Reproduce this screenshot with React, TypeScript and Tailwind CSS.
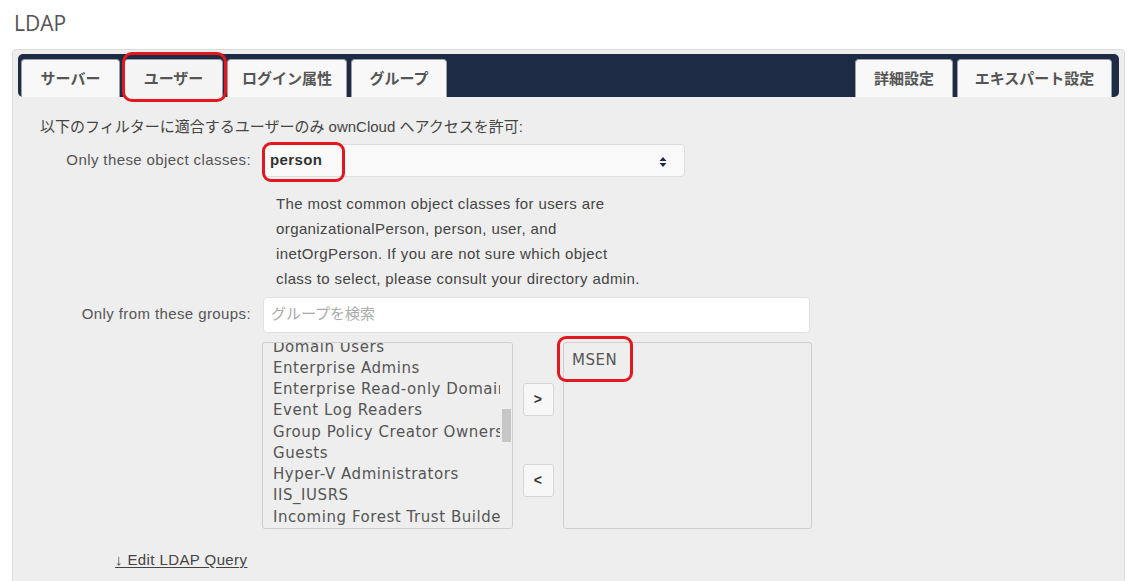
import React from "react";

const JP = "'Liberation Sans', 'Noto Sans CJK JP', sans-serif";

function Tab({ label, w, active }: { label: string; w: string; active?: boolean }) {
  return (
    <div
      className={`${w} h-[38px] flex items-center justify-center rounded-t-[4px] border border-b-0 border-[#9aa0a8] ${
        active ? "bg-[#f4f4f4]" : "bg-[#f8f8f8]"
      } text-[15px] font-bold text-[#555]`}
      style={{ fontFamily: "'Noto Sans CJK JP', sans-serif" }}
    >
      {label}
    </div>
  );
}

const leftItems = [
  "Domain Users",
  "Enterprise Admins",
  "Enterprise Read-only Domain Controllers",
  "Event Log Readers",
  "Group Policy Creator Owners",
  "Guests",
  "Hyper-V Administrators",
  "IIS_IUSRS",
  "Incoming Forest Trust Builders",
];

export default function App() {
  return (
    <div
      className="relative w-[1130px] h-[581px] overflow-hidden bg-white text-[15px] tracking-[0.4px] text-[#444]"
      style={{ fontFamily: JP }}
    >
      <div
        className="pl-[14px] pt-[8px] h-[49px] text-[21px] tracking-normal text-[#555]"
        style={{ fontFamily: "'Open Sans', sans-serif" }}
      >
        LDAP
      </div>

      <div className="ml-[12px] mr-[5px] h-[540px] border border-[#dcdcdc] rounded-t-[4px] bg-[#eeeeee] pt-[4px] px-[5px]">
        {/* tab bar */}
        <div className="h-[43px] bg-[#1d2c44] rounded-[5px] flex items-end pl-[3px] pr-[7px] gap-[4px] tracking-normal">
          <Tab label="サーバー" w="w-[99px]" />
          <Tab label="ユーザー" w="w-[99px]" active />
          <Tab label="ログイン属性" w="w-[120px]" />
          <Tab label="グループ" w="w-[96px]" />
          <div className="flex-1" />
          <Tab label="詳細設定" w="w-[98px]" />
          <Tab label="エキスパート設定" w="w-[155px]" />
        </div>

        {/* content */}
        <div className="pt-[19px] pl-[22px] tracking-normal text-[#444]" style={{ fontFamily: JP }}>
          以下のフィルターに適合するユーザーのみ ownCloud ヘアクセスを許可:
        </div>

        <div className="flex items-center mt-[5px] -ml-[5px]">
          <div className="w-[238px] text-right text-[#555] whitespace-nowrap">Only these object classes:</div>
          <div className="ml-[12px] w-[422px] h-[33px] bg-[#f9f9f9] border border-[#dedede] rounded-[4px] flex items-center px-[6px] justify-between">
            <span className="font-bold text-[#333]">person</span>
            <svg width="8" height="12" viewBox="0 0 8 12" className="mr-[11px] mt-[3px]">
              <path d="M4 1 L7.5 5 L0.5 5 Z" fill="#1d2c44" />
              <path d="M4 11 L7.5 7 L0.5 7 Z" fill="#1d2c44" />
            </svg>
          </div>
        </div>

        <div className="ml-[258px] mt-[14px] leading-[25px] text-[#444] whitespace-nowrap">
          The most common object classes for users are
          <br />
          organizationalPerson, person, user, and
          <br />
          inetOrgPerson. If you are not sure which object
          <br />
          class to select, please consult your directory admin.
        </div>

        <div className="flex items-center mt-[6px] -ml-[5px]">
          <div className="w-[238px] text-right text-[#555] whitespace-nowrap">Only from these groups:</div>
          <div className="ml-[12px] w-[547px] h-[36px] bg-white border border-[#e2e2e2] rounded-[4px] flex items-center px-[7px] text-[#aaa] tracking-normal">
            グループを検索
          </div>
        </div>

        <div
          className="flex mt-[9px] ml-[244px] text-[15px] tracking-[0.55px] text-[#555]"
          style={{ fontFamily: "'DejaVu Sans', Verdana, sans-serif" }}
        >
          <div className="relative w-[251px] h-[187px] border border-[#cfcfcf] rounded-[3px] bg-[#eeeeee] overflow-hidden">
            <div className="-mt-[6px] pl-[10px] pr-[12px]">
              {leftItems.map((t) => (
                <div key={t} className="h-[21.25px] leading-[21.25px] whitespace-nowrap overflow-hidden">
                  {t}
                </div>
              ))}
            </div>
            <div className="absolute right-0 top-0 w-[10px] h-full bg-[#eeeeee]">
              <div className="mt-[66px] h-[33px] w-[9px] bg-[#c6c6c6]" />
            </div>
          </div>

          <div className="w-[50px] flex flex-col items-center pt-[41px] gap-[48px]">
            <button
              className="w-[31px] h-[33px] border border-[#d6d6d6] rounded-[3px] bg-[#f7f7f7] text-[14px] font-bold text-[#333]"
              style={{ fontFamily: "'Liberation Sans', sans-serif" }}
            >
              &gt;
            </button>
            <button
              className="w-[31px] h-[33px] border border-[#d6d6d6] rounded-[3px] bg-[#f7f7f7] text-[14px] font-bold text-[#333]"
              style={{ fontFamily: "'Liberation Sans', sans-serif" }}
            >
              &lt;
            </button>
          </div>

          <div className="w-[249px] h-[187px] border border-[#cfcfcf] rounded-[3px] bg-[#eeeeee] pl-[8px] pt-[7px]">
            <div className="h-[21.25px] leading-[21.25px]">MSEN</div>
          </div>
        </div>

        <div className="mt-[20px] ml-[97px] text-[#444] underline underline-offset-[2px]">
          ↓ Edit LDAP Query
        </div>
      </div>

      {/* red annotations */}
      <div className="absolute left-[122px] top-[52px] w-[105px] h-[50px] border-[3px] border-[#e3171f] rounded-[10px]" />
      <div className="absolute left-[262px] top-[142px] w-[83px] h-[40px] border-[3px] border-[#e3171f] rounded-[9px]" />
      <div className="absolute left-[557px] top-[336px] w-[76px] h-[46px] border-[3px] border-[#e3171f] rounded-[9px]" />
    </div>
  );
}
